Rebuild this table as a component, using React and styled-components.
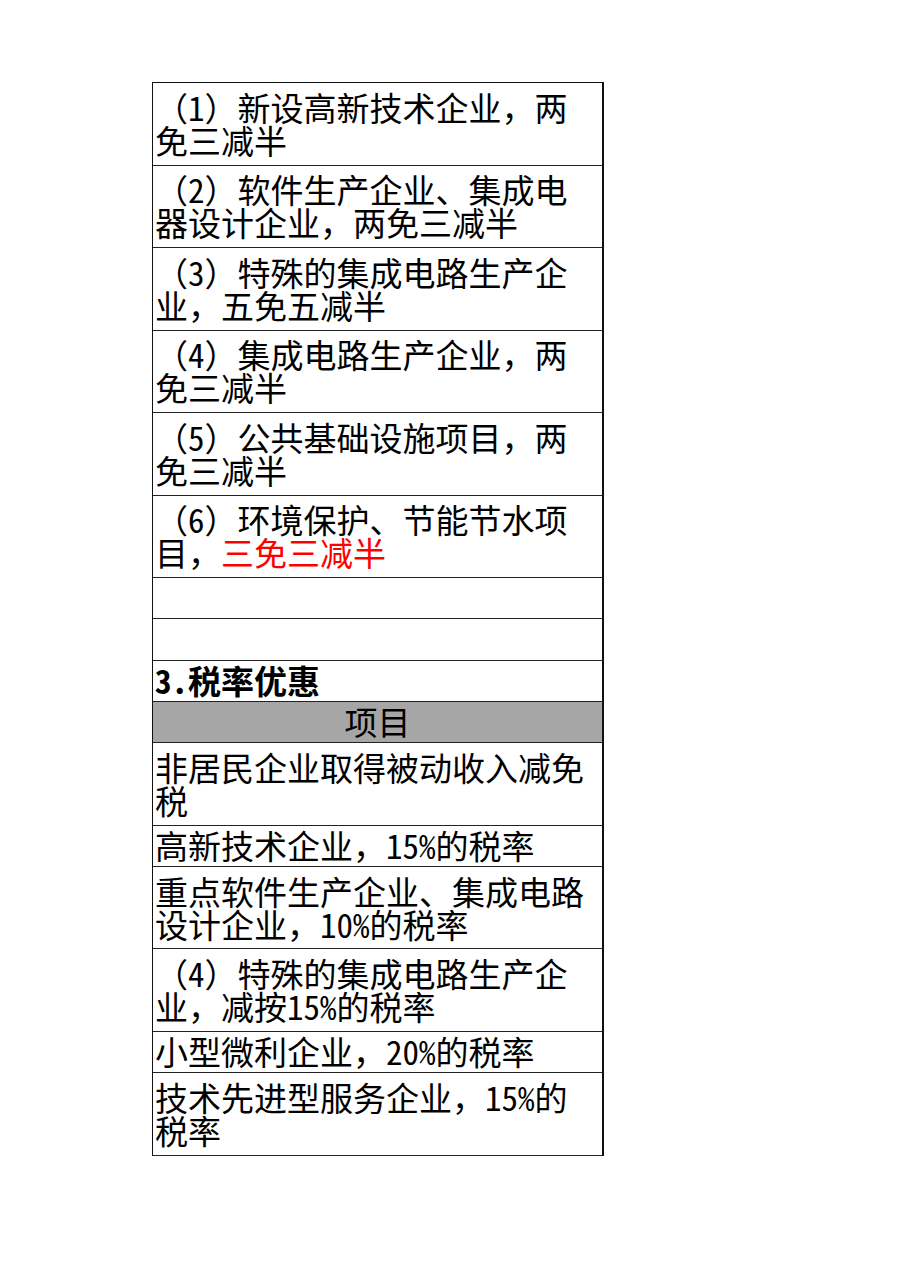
import React from 'react';
import styled, { createGlobalStyle } from 'styled-components';

const GlobalStyle = createGlobalStyle`
  html, body {
    margin: 0;
    padding: 0;
    background: #fff;
  }
  body {
    font-family: "Noto Sans Mono CJK SC", "Noto Sans CJK SC", "Liberation Sans", sans-serif;
  }
`;

const Sheet = styled.div`
  padding: 82px 0 0 152px;
  width: 909px;
  height: 1286px;
  box-sizing: border-box;
`;

const Table = styled.div`
  width: 452px;
  box-sizing: border-box;
  border-top: 1px solid #111;
  border-left: 1px solid #111;
  border-right: 2px solid #111;
  display: flex;
  flex-direction: column;
`;

const Row = styled.div`
  height: ${({ lines }) => (lines === 2 ? 82.5 : 41.25)}px;
  box-sizing: border-box;
  border-bottom: 1px solid #222;
  background: ${({ shaded }) => (shaded ? '#a6a6a6' : '#fff')};
  display: flex;
  flex-direction: column;
  justify-content: center;
  align-items: ${({ center }) => (center ? 'center' : 'flex-start')};
  padding: 0 2px;
  font-size: 33px;
  line-height: 33px;
  font-weight: ${({ bold }) => (bold ? 700 : 400)};
  color: #000;
`;

const Line = styled.span`
  white-space: nowrap;
  display: block;
`;

const Red = styled.span`
  color: #ff0000;
`;

const rows = [
  { lines: ['（1）新设高新技术企业，两', '免三减半'] },
  { lines: ['（2）软件生产企业、集成电', '器设计企业，两免三减半'] },
  { lines: ['（3）特殊的集成电路生产企', '业，五免五减半'] },
  { lines: ['（4）集成电路生产企业，两', '免三减半'] },
  { lines: ['（5）公共基础设施项目，两', '免三减半'] },
  { lines: ['（6）环境保护、节能节水项', <>目，<Red>三免三减半</Red></>] },
  { lines: [''] },
  { lines: [''] },
  { lines: ['3.税率优惠'], bold: true },
  { lines: ['项目'], shaded: true, center: true },
  { lines: ['非居民企业取得被动收入减免', '税'] },
  { lines: ['高新技术企业，15%的税率'] },
  { lines: ['重点软件生产企业、集成电路', '设计企业，10%的税率'] },
  { lines: ['（4）特殊的集成电路生产企', '业，减按15%的税率'] },
  { lines: ['小型微利企业，20%的税率'] },
  { lines: ['技术先进型服务企业，15%的', '税率'] },
];

export default function App() {
  return (
    <>
      <GlobalStyle />
      <Sheet>
        <Table>
          {rows.map((r, i) => (
            <Row
              key={i}
              lines={r.lines.length}
              bold={r.bold}
              shaded={r.shaded}
              center={r.center}
            >
              {r.lines.map((l, j) => (
                <Line key={j}>{l}</Line>
              ))}
            </Row>
          ))}
        </Table>
      </Sheet>
    </>
  );
}
